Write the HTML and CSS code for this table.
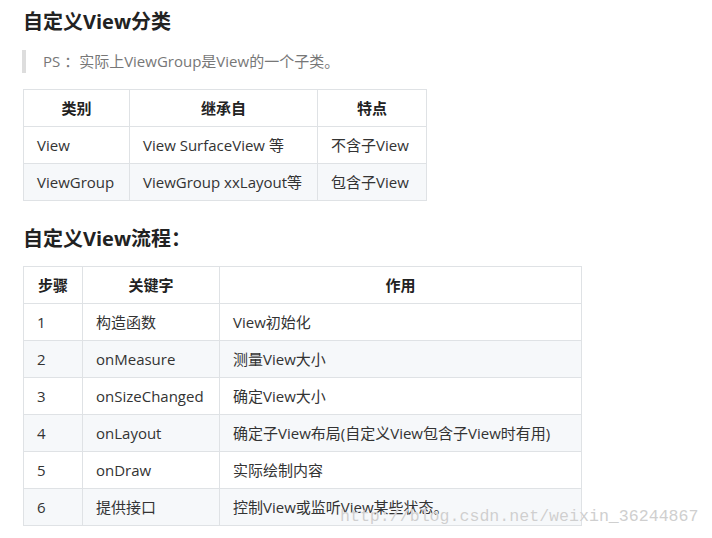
FILE: index.html
```html
<!DOCTYPE html>
<html lang="zh-CN">
<head>
  <meta charset="UTF-8">
  <meta name="viewport" content="width=device-width, initial-scale=1.0">
  <title>自定义View</title>
  <link rel="stylesheet" href="styles.css">
</head>
<body>
  <div class="post">
    <!-- 分类 -->
    <h2 class="title">自定义View分类</h2>
    <blockquote class="quote">PS ：实际上ViewGroup是View的一个子类。</blockquote>
    <table class="grid kinds">
      <colgroup>
        <col class="c1">
        <col class="c2">
        <col class="c3">
      </colgroup>
      <thead>
        <tr><th>类别</th><th>继承自</th><th>特点</th></tr>
      </thead>
      <tbody>
        <tr><td>View</td><td>View SurfaceView 等</td><td>不含子View</td></tr>
        <tr><td>ViewGroup</td><td>ViewGroup xxLayout等</td><td>包含子View</td></tr>
      </tbody>
    </table>

    <!-- 流程 -->
    <h2 class="title second">自定义View流程：</h2>
    <table class="grid steps">
      <colgroup>
        <col class="c1">
        <col class="c2">
        <col class="c3">
      </colgroup>
      <thead>
        <tr><th>步骤</th><th>关键字</th><th>作用</th></tr>
      </thead>
      <tbody>
        <tr><td>1</td><td>构造函数</td><td>View初始化</td></tr>
        <tr><td>2</td><td>onMeasure</td><td>测量View大小</td></tr>
        <tr><td>3</td><td>onSizeChanged</td><td>确定View大小</td></tr>
        <tr><td>4</td><td>onLayout</td><td>确定子View布局(自定义View包含子View时有用)</td></tr>
        <tr><td>5</td><td>onDraw</td><td>实际绘制内容</td></tr>
        <tr><td>6</td><td>提供接口</td><td>控制View或监听View某些状态。</td></tr>
      </tbody>
    </table>
    <!-- 水印 -->
    <span class="mark">http://blog.csdn.net/weixin_36244867</span>
  </div>
</body>
</html>
```

FILE: styles.css
```css
* {
  margin: 0;
  padding: 0;
  box-sizing: border-box;
}
body {
  background: #fff;
  color: #333;
  font-family: "Open Sans", "Noto Sans CJK SC", sans-serif;
  font-size: 15px;
}
.post {
  position: relative;
  padding: 7px 0 0 23px;
  height: 538px;
}
.title {
  font-size: 20px;
  line-height: 30px;
  font-weight: 700;
  color: #222;
}
.title.second {
  margin-top: 23px;
}
.quote {
  margin: 13px 0 16px -1px;
  border-left: 4px solid #ddd;
  padding-left: 17px;
  line-height: 23px;
  font-size: 15px;
  color: #777;
}
.grid {
  border-collapse: collapse;
  table-layout: fixed;
}
.grid th,
.grid td {
  border: 1px solid #dfe2e5;
  padding: 8px 13px;
  line-height: 20px;
  text-align: left;
  white-space: nowrap;
}
.grid th {
  text-align: center;
  font-weight: 700;
  color: #222;
}
.grid tbody tr:nth-child(2n) {
  background: #f6f8fa;
}
.kinds {
  width: 403px;
}
.kinds .c1 { width: 106px; }
.kinds .c2 { width: 188px; }
.kinds .c3 { width: 109px; }
.steps {
  margin-top: 12px;
  width: 558px;
}
.steps .c1 { width: 59px; }
.steps .c2 { width: 137px; }
.steps .c3 { width: 362px; }
.mark {
  position: absolute;
  left: 340px;
  top: 506px;
  font-family: "Liberation Mono", "DejaVu Sans Mono", monospace;
  font-size: 16.6px;
  line-height: 22px;
  color: #cfcfcf;
  text-shadow: 0 0 1px #fff;
}
```
